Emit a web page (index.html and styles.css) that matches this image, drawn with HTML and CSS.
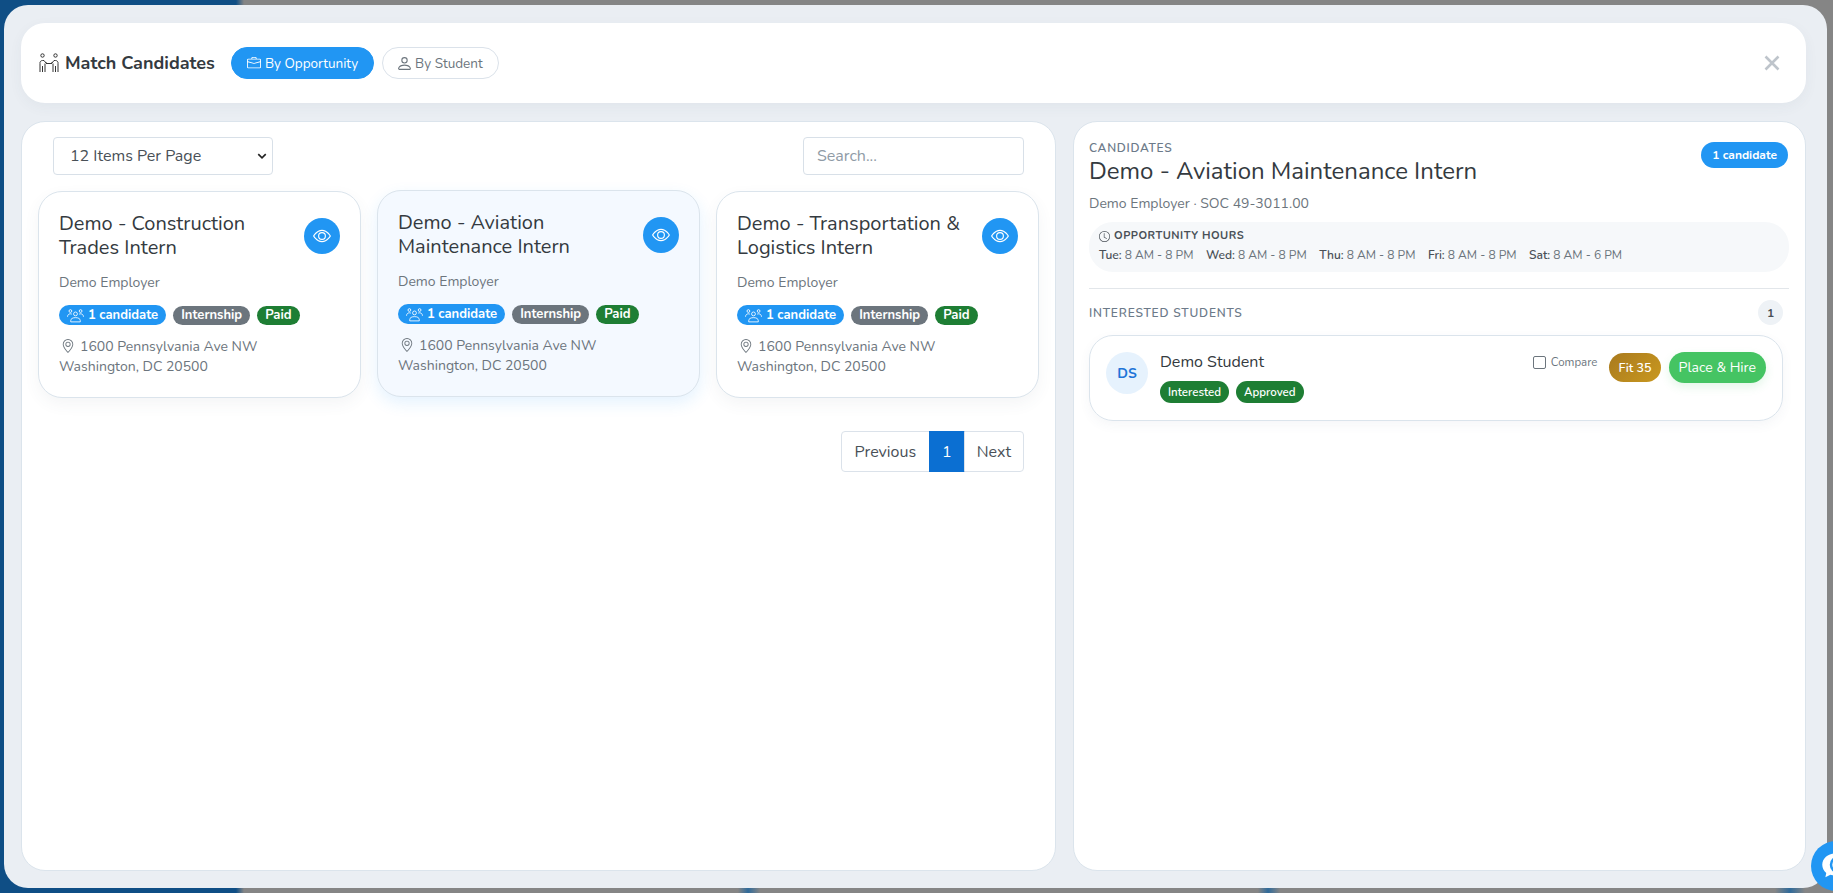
FILE: index.html
```html
<!DOCTYPE html>
<html lang="en">

<head>
    <meta charset="UTF-8">
    <meta name="viewport" content="width=device-width, initial-scale=1.0">
    <title>Match Candidates</title>
    <link rel="stylesheet" href="styles.css">
</head>

<body>
    <div class="modal">
        <header class="top-bar">
            <div class="top-title">
                <svg class="icon-match" viewBox="0 0 22 20" width="22" height="20" fill="none" stroke="#333" stroke-width="1">
                    <circle cx="4.5" cy="2.5" r="1.7"/>
                    <circle cx="17.5" cy="2.5" r="1.7"/>
                    <path d="M2 19v-8.500a2.500 2.500 0 0 1 2.500-3H6l2 2.500h1M20 19v-8.500a2.500 2.500 0 0 0-2.500-3H16l-2 2.500h-1M4.500 13v6M17.500 13v6M7 10.500v8.500M15 10.500v8.500M8 10.500h6"/>
                </svg>
                <h1>Match Candidates</h1>
            </div>
            <button class="mode-btn active">
                <svg viewBox="0 0 16 16" width="14" height="14" fill="currentColor"><path d="M6.500 1A1.500 1.500 0 0 0 5 2.500V3H1.500A1.500 1.500 0 0 0 0 4.500v8A1.500 1.500 0 0 0 1.500 14h13a1.500 1.500 0 0 0 1.500-1.500v-8A1.500 1.500 0 0 0 14.500 3H11v-.5A1.500 1.500 0 0 0 9.500 1h-3zm0 1h3a.5.5 0 0 1 .5.5V3H6v-.5a.5.5 0 0 1 .5-.5zm1.886 6.914L15 7.151V12.500a.5.5 0 0 1-.5.5h-13a.5.5 0 0 1-.5-.5V7.150l6.614 1.764a1.500 1.500 0 0 0 .772 0zM1.500 4h13a.5.5 0 0 1 .5.5v1.616L8.129 7.948a.5.5 0 0 1-.258 0L1 6.116V4.500a.5.5 0 0 1 .5-.5z"/></svg>
                By Opportunity
            </button>
            <button class="mode-btn">
                <svg viewBox="2 1 12 14" width="13" height="15" fill="currentColor"><path d="M8 8a3 3 0 1 0 0-6 3 3 0 0 0 0 6zm2-3a2 2 0 1 1-4 0 2 2 0 0 1 4 0zm4 8c0 1-1 1-1 1H3s-1 0-1-1 1-4 6-4 6 3 6 4zm-1-.004c-.001-.246-.154-.986-.832-1.664C11.516 10.680 10.289 10 8 10c-2.290 0-3.516.680-4.168 1.332-.678.678-.830 1.418-.832 1.664h10z"/></svg>
                By Student
            </button>
            <svg class="close" viewBox="0 0 16 16" width="16" height="16" stroke="#bec4cb" stroke-width="2.600" fill="none"><path d="M1.500 1.500l13 13M14.500 1.500l-13 13"/></svg>
        </header>

        <div class="columns">
            <section class="panel list-panel">
                <div class="filters">
                    <div class="select-box">
                        <span>12 Items Per Page</span>
                        <svg viewBox="0 0 16 16" width="10" height="10" fill="none" stroke="#222" stroke-width="2.600"><path d="M2 5l6 6 6-6"/></svg>
                    </div>
                    <div class="search-box">Search...</div>
                </div>

                <div class="card-grid">
                    <article class="card">
                        <div class="card-head">
                            <h3>Demo - Construction Trades Intern</h3>
                            <span class="eye-btn"><svg viewBox="0 0 16 16" width="18" height="18" fill="currentColor"><use href="#eye"/></svg></span>
                        </div>
                        <p class="employer">Demo Employer</p>
                        <div class="tags">
                            <span class="tag tag-blue"><svg viewBox="0 0 16 16" width="17" height="17" fill="none" stroke="currentColor" stroke-width="0.800"><use href="#people"/></svg>1 candidate</span>
                            <span class="tag tag-gray">Internship</span>
                            <span class="tag tag-green">Paid</span>
                        </div>
                        <p class="address"><svg viewBox="0 0 16 16" width="14" height="14" fill="currentColor"><use href="#pin"/></svg>1600 Pennsylvania Ave NW<br>Washington, DC 20500</p>
                    </article>

                    <article class="card selected">
                        <div class="card-head">
                            <h3>Demo - Aviation Maintenance Intern</h3>
                            <span class="eye-btn"><svg viewBox="0 0 16 16" width="18" height="18" fill="currentColor"><use href="#eye"/></svg></span>
                        </div>
                        <p class="employer">Demo Employer</p>
                        <div class="tags">
                            <span class="tag tag-blue"><svg viewBox="0 0 16 16" width="17" height="17" fill="none" stroke="currentColor" stroke-width="0.800"><use href="#people"/></svg>1 candidate</span>
                            <span class="tag tag-gray">Internship</span>
                            <span class="tag tag-green">Paid</span>
                        </div>
                        <p class="address"><svg viewBox="0 0 16 16" width="14" height="14" fill="currentColor"><use href="#pin"/></svg>1600 Pennsylvania Ave NW<br>Washington, DC 20500</p>
                    </article>

                    <article class="card">
                        <div class="card-head">
                            <h3>Demo - Transportation &amp; Logistics Intern</h3>
                            <span class="eye-btn"><svg viewBox="0 0 16 16" width="18" height="18" fill="currentColor"><use href="#eye"/></svg></span>
                        </div>
                        <p class="employer">Demo Employer</p>
                        <div class="tags">
                            <span class="tag tag-blue"><svg viewBox="0 0 16 16" width="17" height="17" fill="none" stroke="currentColor" stroke-width="0.800"><use href="#people"/></svg>1 candidate</span>
                            <span class="tag tag-gray">Internship</span>
                            <span class="tag tag-green">Paid</span>
                        </div>
                        <p class="address"><svg viewBox="0 0 16 16" width="14" height="14" fill="currentColor"><use href="#pin"/></svg>1600 Pennsylvania Ave NW<br>Washington, DC 20500</p>
                    </article>
                </div>

                <div class="pager">
                    <a>Previous</a>
                    <a class="current">1</a>
                    <a class="next">Next</a>
                </div>
            </section>

            <section class="panel detail-panel">
                <div class="detail-head">
                    <div>
                        <div class="eyebrow">CANDIDATES</div>
                        <h2>Demo - Aviation Maintenance Intern</h2>
                    </div>
                    <span class="count-pill">1 candidate</span>
                </div>
                <p class="detail-sub">Demo Employer · SOC 49-3011.00</p>

                <div class="hours">
                    <div class="hours-title">
                        <svg viewBox="0 0 16 16" width="11" height="11" fill="currentColor"><path d="M8 3.500a.5.5 0 0 0-1 0V9a.5.5 0 0 0 .252.434l3.500 2a.5.5 0 0 0 .496-.868L8 8.710V3.500z"/><path d="M8 16A8 8 0 1 0 8 0a8 8 0 0 0 0 16zm7-8A7 7 0 1 1 1 8a7 7 0 0 1 14 0z"/></svg>
                        OPPORTUNITY HOURS
                    </div>
                    <div class="hours-days">
                        <span><b>Tue:</b> 8 AM - 8 PM</span>
                        <span><b>Wed:</b> 8 AM - 8 PM</span>
                        <span><b>Thu:</b> 8 AM - 8 PM</span>
                        <span><b>Fri:</b> 8 AM - 8 PM</span>
                        <span><b>Sat:</b> 8 AM - 6 PM</span>
                    </div>
                </div>

                <div class="students-head">
                    <span>INTERESTED STUDENTS</span>
                    <span class="count-dot">1</span>
                </div>

                <div class="student-card">
                    <div class="avatar">DS</div>
                    <div class="student-info">
                        <div class="student-name">Demo Student</div>
                        <div class="tags">
                            <span class="tag tag-green tag-tall">Interested</span>
                            <span class="tag tag-green tag-tall">Approved</span>
                        </div>
                    </div>
                    <label class="compare"><span class="check"></span>Compare</label>
                    <span class="fit">Fit 35</span>
                    <button class="hire">Place &amp; Hire</button>
                </div>
            </section>
        </div>
    </div>

    <div class="chat-bubble">
        <svg viewBox="0 0 24 24" width="30" height="30"><path fill="#fff" d="M11 2C5.500 2 1 6 1 11c0 2.600 1.200 4.900 3.200 6.500L3.500 21l4-2c1.100.4 2.300.6 3.500.6C16.500 19.600 21 15.600 21 11S16.500 2 11 2z"/><circle cx="14" cy="11" r="6" fill="none" stroke="#2196f3" stroke-width="2"/></svg>
    </div>

    <!-- shared icons -->
    <svg class="sprites" width="0" height="0">
        <symbol id="eye" viewBox="0 0 16 16">
            <path d="M16 8s-3-5.500-8-5.500S0 8 0 8s3 5.500 8 5.500S16 8 16 8zM1.173 8a13.133 13.133 0 0 1 1.660-2.043C4.120 4.668 5.880 3.500 8 3.500c2.120 0 3.879 1.168 5.168 2.457A13.133 13.133 0 0 1 14.828 8c-.058.087-.122.183-.195.288-.335.480-.830 1.120-1.465 1.755C11.879 11.332 10.119 12.500 8 12.500c-2.120 0-3.879-1.168-5.168-2.457A13.134 13.134 0 0 1 1.172 8z"/>
            <path d="M8 5.500a2.500 2.500 0 1 0 0 5 2.500 2.500 0 0 0 0-5zM4.500 8a3.500 3.500 0 1 1 7 0 3.500 3.500 0 0 1-7 0z"/>
        </symbol>
        <symbol id="pin" viewBox="0 0 16 16">
            <path d="M12.166 8.940c-.524 1.062-1.234 2.120-1.960 3.070A31.493 31.493 0 0 1 8 14.580a31.481 31.481 0 0 1-2.206-2.570c-.726-.95-1.436-2.008-1.960-3.070C3.304 7.867 3 6.862 3 6a5 5 0 0 1 10 0c0 .862-.305 1.867-.834 2.940zM8 16s6-5.686 6-10A6 6 0 0 0 2 6c0 4.314 6 10 6 10z"/>
            <path d="M8 8a2 2 0 1 1 0-4 2 2 0 0 1 0 4zm0 1a3 3 0 1 0 0-6 3 3 0 0 0 0 6z"/>
        </symbol>
        <symbol id="people" viewBox="0 0 16 16">
            <circle cx="8" cy="6.500" r="1.800"/>
            <circle cx="3.200" cy="3.800" r="1.300"/>
            <circle cx="12.800" cy="3.800" r="1.300"/>
            <path d="M3.500 14v-1.200c0-1.700 1.800-2.800 4.500-2.800s4.500 1.100 4.500 2.800V14zM.5 9.200c0-1.600 1.100-2.800 2.700-2.800.6 0 1 .1 1.400.4M15.500 9.200c0-1.600-1.100-2.800-2.700-2.800-.6 0-1 .1-1.400.4"/>
        </symbol>
    </svg>
</body>

</html>
```

FILE: styles.css
```css
* {
    box-sizing: border-box;
}

html,
body {
    height: 100%;
}

body {
    margin: 0;
    overflow: hidden;
    font-family: "Nunito", "Noto Sans", sans-serif;
    color: #343a40;
    padding: 5px 6px 5px 4px;
    background-color: #858585;
    background-image:
        linear-gradient(90deg, transparent 738px, #2f6a9a 748px, transparent 760px, transparent 1258px, #2f6a9a 1268px, transparent 1280px, transparent 1775px, #2f6a9a 1790px, transparent 1805px),
        linear-gradient(90deg, #0f4e85 0, #0f4e85 236px, #858585 244px);
    background-size: 100% 6px, 100% 100%;
    background-position: left bottom, left top;
    background-repeat: no-repeat;
}

.modal {
    height: 100%;
    background-color: #eaeef3;
    border-radius: 24px;
    padding: 18px 21px 17px 17px;
    display: flex;
    flex-direction: column;
    gap: 18px;
}

.top-bar {
    height: 80px;
    flex: none;
    display: flex;
    align-items: center;
    background-color: white;
    border-radius: 24px;
    padding: 0 26px 0 17px;
    box-shadow: 0 4px 14px rgba(60, 70, 90, 0.05);
}

.top-title {
    display: flex;
    align-items: center;
    gap: 5px;
    margin-right: 16px;
}

.top-title h1 {
    margin: 0;
    font-size: 18px;
    font-weight: 700;
    color: #343a40;
}

.mode-btn {
    height: 32px;
    display: flex;
    align-items: center;
    gap: 4px;
    margin-right: 8px;
    padding: 0 15px;
    border: 1px solid #dbe2ea;
    border-radius: 16px;
    background-color: white;
    color: #6c757d;
    font-family: inherit;
    font-size: 13.5px;
}

.mode-btn.active {
    background-color: #2196f3;
    border-color: #2196f3;
    color: white;
}

.close {
    margin-left: auto;
}

.columns {
    flex: 1;
    display: flex;
    gap: 17px;
    min-height: 0;
}

.panel {
    background-color: white;
    border: 1px solid #dbe4ec;
    border-radius: 24px;
}

.list-panel {
    flex: 0 0 1035px;
    padding: 15px 16px;
}

.detail-panel {
    flex: 1;
    padding: 15px 16px 15px 15px;
}

.filters {
    display: flex;
    justify-content: space-between;
    padding: 0 15px;
    margin-bottom: 16px;
}

.select-box,
.search-box {
    height: 38px;
    border: 1px solid #d8e0e8;
    border-radius: 4px;
    display: flex;
    align-items: center;
}

.select-box {
    width: 220px;
    padding: 0 5px 0 16px;
    justify-content: space-between;
    font-size: 16px;
    color: #495057;
}

.search-box {
    width: 221px;
    padding: 0 13px;
    font-size: 16px;
    color: #8f9ba6;
}

.card-grid {
    display: grid;
    grid-template-columns: repeat(3, 1fr);
    gap: 16px;
}

.card {
    height: 207px;
    background-color: white;
    border: 1px solid #dbe4ec;
    border-radius: 24px;
    padding: 20px;
    box-shadow: 0 6px 16px rgba(60, 80, 110, 0.06);
}

.card.selected {
    background-color: #f4f9ff;
    transform: translateY(-1px);
    box-shadow: 0 6px 16px rgba(33, 150, 243, 0.12);
}

.card-head {
    display: flex;
    align-items: center;
    justify-content: space-between;
    gap: 10px;
}

.card-head h3 {
    margin: 0;
    font-size: 20px;
    font-weight: 400;
    line-height: 24px;
    color: #343a40;
}

.eye-btn {
    flex: none;
    width: 36px;
    height: 36px;
    border-radius: 50%;
    background-color: #2196f3;
    color: white;
    display: flex;
    align-items: center;
    justify-content: center;
}

.employer {
    margin: 13px 0 12px;
    font-size: 14px;
    line-height: 20px;
    color: #6c757d;
}

.tags {
    display: flex;
    align-items: center;
    gap: 7px;
}

.tag {
    display: inline-flex;
    align-items: center;
    gap: 4px;
    height: 19px;
    padding: 0 8px;
    border-radius: 10px;
    font-size: 13px;
    font-weight: 700;
    color: white;
    white-space: nowrap;
}

.tag-blue {
    height: 20px;
    background-color: #2196f3;
}

.tag-gray {
    background-color: #6c757d;
}

.tag-green {
    background-color: #1e7e34;
}

.tag-tall {
    height: 22px;
    font-size: 11.5px;
    font-weight: 600;
    border-radius: 11px;
}

.address {
    margin: 12px 0 0;
    font-size: 14px;
    line-height: 20px;
    color: #6c757d;
}

.address svg {
    margin: 0 5px 0 2px;
    vertical-align: -2px;
}

.pager {
    display: flex;
    justify-content: flex-end;
    margin: 33px 15px 0 0;
}

.pager a {
    height: 41px;
    display: flex;
    align-items: center;
    padding: 0 13px;
    border: 1px solid #dbe2ea;
    margin-left: -1px;
    font-size: 16px;
    color: #495057;
}

.pager a:first-child {
    border-radius: 4px 0 0 4px;
}

.pager a:last-child {
    border-radius: 0 4px 4px 0;
}

.pager a.current {
    padding: 0 12px;
    background-color: #0b6fd2;
    border-color: #0b6fd2;
    color: white;
}

.pager a.next {
    padding: 0 12px;
}

.detail-head {
    display: flex;
    justify-content: space-between;
    align-items: flex-start;
    padding-right: 1px;
}

.eyebrow {
    font-size: 12px;
    font-weight: 600;
    line-height: 16px;
    letter-spacing: 0.7px;
    color: #6c7a89;
    margin-top: 3px;
}

.detail-head h2 {
    margin: 1px 0 0;
    font-size: 24px;
    font-weight: 400;
    line-height: 29px;
    color: #343a40;
}

.count-pill {
    height: 26px;
    margin-top: 5px;
    padding: 0 11px;
    border-radius: 13px;
    background-color: #2196f3;
    color: white;
    font-size: 12px;
    font-weight: 700;
    display: flex;
    align-items: center;
}

.detail-sub {
    margin: 8px 0 8px;
    font-size: 14px;
    line-height: 20px;
    color: #6c757d;
}

.hours {
    height: 50px;
    padding: 5px 10px;
    border-radius: 24px;
    background-color: #f6f8fa;
}

.hours-title {
    display: flex;
    align-items: center;
    gap: 4px;
    font-size: 11px;
    font-weight: 700;
    line-height: 18px;
    letter-spacing: 0.5px;
    color: #495057;
}

.hours-days {
    display: flex;
    gap: 12.5px;
    font-size: 12px;
    line-height: 20px;
    color: #6c757d;
}

.hours-days b {
    font-weight: 600;
    color: #495057;
}

.students-head {
    margin-top: 16px;
    padding-top: 11px;
    border-top: 1px solid #e2e6ea;
    display: flex;
    justify-content: space-between;
    align-items: center;
    padding-right: 6px;
    font-size: 12px;
    font-weight: 600;
    letter-spacing: 0.8px;
    color: #6c7a89;
}

.count-dot {
    width: 25px;
    height: 25px;
    border-radius: 50%;
    background-color: #eef2f6;
    color: #495057;
    font-size: 12px;
    font-weight: 700;
    letter-spacing: 0;
    display: flex;
    align-items: center;
    justify-content: center;
}

.student-card {
    margin: 10px 6px 0 0;
    height: 86px;
    display: flex;
    align-items: flex-start;
    padding: 16px 16px 0 16px;
    border: 1px solid #dbe4ec;
    border-radius: 24px;
    box-shadow: 0 4px 12px rgba(60, 80, 110, 0.05);
}

.avatar {
    flex: none;
    width: 42px;
    height: 42px;
    border-radius: 50%;
    background-color: #e6f2fd;
    color: #1f75d8;
    font-size: 14px;
    font-weight: 700;
    display: flex;
    align-items: center;
    justify-content: center;
    margin-right: 12px;
}

.student-info {
    flex: 1;
}

.student-name {
    font-size: 16px;
    line-height: 20px;
    margin-bottom: 9px;
    color: #343a40;
}

.compare {
    display: flex;
    align-items: center;
    gap: 5px;
    margin: 0 12px 0 0;
    height: 20px;
    font-size: 11.5px;
    color: #6c757d;
}

.check {
    width: 13px;
    height: 13px;
    border: 1px solid #6c757d;
    border-radius: 2px;
}

.fit {
    height: 29px;
    margin: 1px 8px 0 0;
    padding: 0 9px;
    border-radius: 15px;
    background: linear-gradient(135deg, #a97a1e, #c9981f);
    color: white;
    font-size: 12.5px;
    font-weight: 600;
    display: flex;
    align-items: center;
}

.hire {
    height: 31px;
    padding: 0 10px;
    border: none;
    border-radius: 16px;
    background-color: #45c463;
    color: white;
    font-family: inherit;
    font-size: 14px;
    box-shadow: 0 4px 10px rgba(69, 196, 99, 0.15);
}

.chat-bubble {
    position: fixed;
    left: 1811px;
    top: 841px;
    width: 50px;
    height: 50px;
    border-radius: 50%;
    background-color: #2196f3;
    display: flex;
    align-items: center;
    justify-content: center;
}

.sprites {
    position: absolute;
}
```
